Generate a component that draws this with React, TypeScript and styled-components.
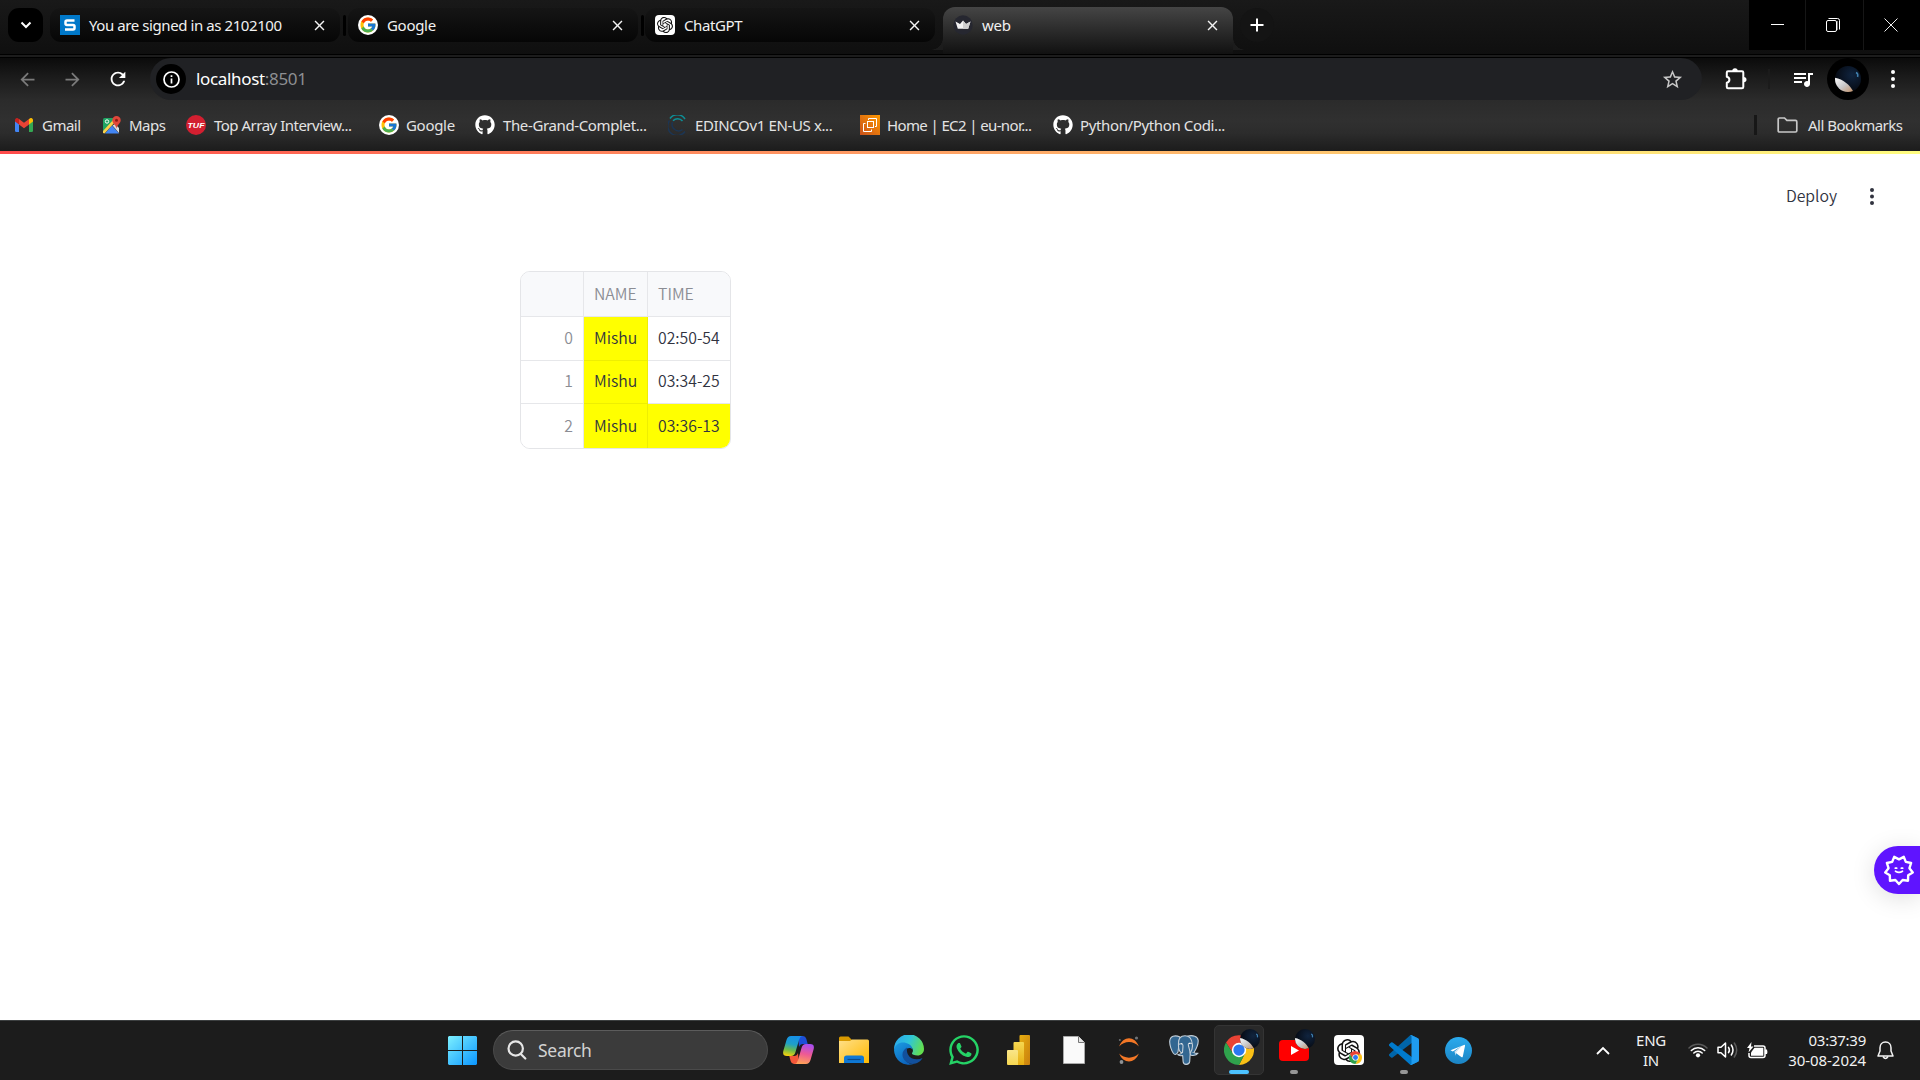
import React from 'react';
import styled, { createGlobalStyle } from 'styled-components';
import { FcGoogle } from 'react-icons/fc';
import { SiOpenai } from 'react-icons/si';
import { FaGithub, FaWhatsapp } from 'react-icons/fa';
import {
  MdArrowBack,
  MdArrowForward,
  MdRefresh,
  MdStarBorder,
  MdQueueMusic,
  MdClose,
} from 'react-icons/md';

const UI_FONT = `"Noto Sans", "Open Sans", sans-serif`;
const APP_FONT = `"Noto Sans CJK SC", "Noto Sans", sans-serif`;

const GlobalStyle = createGlobalStyle`
  * { box-sizing: border-box; }
  body { margin: 0; background: #fff; font-family: ${UI_FONT}; overflow: hidden; }
  svg { display: block; flex: none; }
`;

const Screen = styled.div`
  width: 1920px;
  height: 1080px;
  display: flex;
  flex-direction: column;
  background: #fff;
`;

const Label = styled.span<{ $size?: number; $ls?: number; $color?: string }>`
  font-size: ${(p) => p.$size ?? 15}px;
  letter-spacing: ${(p) => p.$ls ?? 0}px;
  color: ${(p) => p.$color ?? '#f1f1f1'};
  line-height: 20px;
  white-space: pre;
`;

/* ---------- tab strip ---------- */

const TabStrip = styled.header`
  height: 54px;
  display: flex;
  align-items: flex-start;
  padding-left: 8px;
  background: linear-gradient(#191919, #0f0f0f);
`;

const TabSearch = styled.button`
  width: 35px;
  height: 34px;
  margin: 8px 7px 0 0;
  padding: 0;
  border: 0;
  border-radius: 11px;
  background: #000;
  display: grid;
  place-items: center;
`;

const Tab = styled.div`
  width: 290px;
  height: 34px;
  margin-top: 8px;
  padding: 0 12px 0 10px;
  border-radius: 11px;
  background: linear-gradient(#151515, #060606);
  display: flex;
  align-items: center;
  gap: 9px;
`;

const ActiveTab = styled(Tab)`
  position: relative;
  width: 290px;
  height: 47px;
  margin: 7px 7px 0 8px;
  padding: 0 12px 11px 10px;
  border-radius: 12px 12px 0 0;
  background: linear-gradient(#454545, #111);

  &::before,
  &::after {
    content: '';
    position: absolute;
    bottom: 4px;
    width: 12px;
    height: 12px;
  }
  &::before {
    right: 100%;
    background: radial-gradient(circle at 0 0, transparent 11.5px, #1c1c1c 12px);
  }
  &::after {
    left: 100%;
    background: radial-gradient(circle at 100% 0, transparent 11.5px, #1c1c1c 12px);
  }
`;

const TabTitle = styled(Label)`
  flex: 1;
`;

const TabDivider = styled.i<{ $end?: number }>`
  width: 3px;
  height: 21px;
  margin: 15px ${(p) => p.$end ?? 2}px 0 3px;
  border-radius: 2px;
  background: #000;
`;

const NewTab = styled.button`
  width: 34px;
  height: 34px;
  margin-top: 8px;
  padding: 0;
  border: 0;
  border-radius: 17px;
  background: #141414;
  display: grid;
  place-items: center;
`;

const WindowControls = styled.div`
  margin-left: auto;
  height: 50px;
  width: 171px;
  display: grid;
  grid-template-columns: 56px 57px 56px;
  gap: 1px;
  background: #161616;
`;

const WindowButton = styled.div<{ $inset?: number }>`
  background: #000;
  padding-right: ${(p) => p.$inset ?? 0}px;
  display: grid;
  place-items: center;
`;

/* ---------- toolbar ---------- */

const Toolbar = styled.div`
  height: 97px;
  border-top: 1px solid #000;
  background: linear-gradient(#1c1c1c 0 2px, #000 2px 3px, #0b0b0b 3px, #1b1b1b 22px, #2b2b2b 45px, #303030 66px, #2c2c2c 78px, #1c1c1c 96px);
  display: flex;
  flex-direction: column;
`;

const AddressRow = styled.div`
  height: 42px;
  margin-top: 3px;
  display: flex;
  align-items: center;
`;

const NavButtons = styled.div`
  width: 150px;
  padding-left: 17px;
  display: flex;
  align-items: center;
  gap: 24px;
  color: #7b7b7b;
`;

const AddressBar = styled.div`
  width: 1552px;
  height: 42px;
  border-radius: 21px;
  background: #202124;
  display: flex;
  align-items: center;
  padding: 0 18px 0 6px;
`;

const SiteInfo = styled.span`
  width: 30px;
  height: 30px;
  margin-right: 10px;
  border-radius: 50%;
  background: #000;
  display: grid;
  place-items: center;
`;

const Url = styled(Label)`
  flex: 1;
  line-height: 24px;
`;

const Port = styled.span`
  color: #8d8f92;
`;

const ToolbarActions = styled.div`
  flex: 1;
  height: 42px;
  padding-left: 23px;
  display: flex;
  align-items: center;
`;

const ToolbarDivider = styled.i`
  width: 2px;
  height: 20px;
  margin: 0 21px 0 21px;
  background: #1b1b1b;
`;

const AvatarRing = styled.div`
  width: 42px;
  height: 42px;
  margin: 0 21px 0 12px;
  border-radius: 50%;
  background: #000;
  display: grid;
  place-items: center;
`;

const Bookmarks = styled.nav`
  height: 51px;
  padding: 0 0 2px 15px;
  display: flex;
  align-items: center;
`;

const Bookmark = styled.div<{ $width: number; $gap?: number }>`
  width: ${(p) => p.$width}px;
  height: 20px;
  display: flex;
  align-items: center;
  gap: ${(p) => p.$gap ?? 8}px;
`;

const BookmarkDivider = styled.i`
  width: 3px;
  height: 20px;
  margin: 0 20px 0 auto;
  background: #171717;
`;

const AllBookmarks = styled.div`
  width: 143px;
  display: flex;
  align-items: center;
  gap: 10px;
`;

/* ---------- page ---------- */

const Page = styled.main`
  flex: 1;
  position: relative;
  display: flex;
  flex-direction: column;
  font-family: ${APP_FONT};
  font-weight: 350;
`;

const Decoration = styled.div`
  height: 3px;
  background: linear-gradient(90deg, #ff4b4b, #fffd80);
`;

const PageHeader = styled.div`
  height: 85px;
  padding: 0 45px 1px 0;
  display: flex;
  justify-content: flex-end;
  align-items: center;
  gap: 32px;
`;

const DataGrid = styled.div`
  width: 211px;
  height: 178px;
  margin: 32px 0 0 520px;
  border: 1px solid #e4e5e8;
  border-radius: 10px;
  overflow: hidden;
  display: grid;
  grid-template-columns: 63px 64px 82px;
  grid-template-rows: 45px 43.5px 43.5px 44px;
`;

const Cell = styled.div<{ $mark?: boolean; $index?: boolean; $header?: boolean; $lastRow?: boolean; $lastCol?: boolean }>`
  display: flex;
  align-items: center;
  justify-content: ${(p) => (p.$index ? 'flex-end' : 'flex-start')};
  padding: 0 ${(p) => (p.$index ? 10 : 0)}px 2px ${(p) => (p.$index ? 0 : 10)}px;
  font-size: 15.8px;
  white-space: nowrap;
  color: ${(p) => (p.$header || p.$index ? '#8b8d94' : '#31333f')};
  background: ${(p) => (p.$mark ? '#ffff00' : p.$header ? '#f8f9fb' : '#fff')};
  border-right: ${(p) => (p.$lastCol ? 0 : 1)}px solid ${(p) => (p.$mark ? '#eeee02' : '#e6e7ea')};
  border-bottom: ${(p) => (p.$lastRow ? 0 : 1)}px solid ${(p) => (p.$mark ? '#eeee02' : '#e6e7ea')};
`;

const Assistant = styled.div`
  position: absolute;
  right: 0;
  top: 695px;
  width: 46px;
  height: 48px;
  padding-left: 9px;
  border-radius: 24px 0 0 24px;
  background: #5f14ff;
  box-shadow: 0 4px 24px rgba(0, 0, 0, 0.13);
  display: flex;
  align-items: center;
`;

/* ---------- taskbar ---------- */

const Taskbar = styled.footer`
  height: 60px;
  background: #1c1c1c;
  border-top: 1px solid #3c3f40;
  display: flex;
  align-items: center;
  padding: 0 0 1px 448px;
`;

const SearchBox = styled.div`
  width: 275px;
  height: 40px;
  margin: 0 3px 0 16px;
  padding: 0 0 1px 13px;
  border: 1px solid #4a4a4a;
  border-top-color: #5c5c5c;
  border-radius: 20px;
  background: #3b3b3b;
  display: flex;
  align-items: center;
  gap: 11px;
`;

const AppSlot = styled.div<{ $active?: boolean }>`
  position: relative;
  width: 50px;
  height: 50px;
  margin: 0 2.5px;
  border-radius: 5px;
  border: 1px solid ${(p) => (p.$active ? '#343434' : 'transparent')};
  background: ${(p) => (p.$active ? '#292929' : 'transparent')};
  display: grid;
  place-items: center;
`;

const Running = styled.i<{ $wide?: boolean }>`
  position: absolute;
  bottom: 0;
  left: 50%;
  transform: translateX(-50%);
  width: ${(p) => (p.$wide ? 20 : 8)}px;
  height: 4px;
  border-radius: 2px;
  background: ${(p) => (p.$wide ? '#4cc2ff' : '#969696')};
`;

const ProfileBadge = styled.span`
  position: absolute;
  right: 3px;
  top: 3px;
`;

const ShortcutBadge = styled.span`
  position: absolute;
  right: 11px;
  bottom: 10px;
`;

const GptTile = styled.div<{ $size: number }>`
  width: ${(p) => p.$size}px;
  height: ${(p) => p.$size}px;
  border-radius: 4px;
  background: #fff;
  color: #111;
  display: grid;
  place-items: center;
`;

const Tray = styled.div`
  margin-left: auto;
  height: 58px;
  display: flex;
  align-items: center;
  padding-right: 26px;
`;

const Stack = styled.div<{ $align: string; $width: number }>`
  width: ${(p) => p.$width}px;
  padding-bottom: 1px;
  display: flex;
  flex-direction: column;
  align-items: ${(p) => p.$align};
`;

const StatusIcons = styled.div`
  display: flex;
  align-items: center;
  gap: 9px;
  margin: 0 21px 0 -4px;
`;

const BellButton = styled.span`
  margin-left: 11px;
`;

/* ---------- drawings ---------- */

const GoogleBadge = () => (
  <svg width="20" height="20" viewBox="0 0 20 20">
    <circle cx="10" cy="10" r="10" fill="#fff" />
    <FcGoogle x={1} y={1} width={18} height={18} size={18} />
  </svg>
);

const CloseIcon = () => <MdClose size={17} color="#f4f4f4" />;

const Dots = ({ color, h = 18, r = 2 }: { color: string; h?: number; r?: number }) => (
  <svg width="6" height={h} viewBox={`0 0 6 ${h}`} fill={color}>
    <circle cx="3" cy={r} r={r} />
    <circle cx="3" cy={h / 2} r={r} />
    <circle cx="3" cy={h - r} r={r} />
  </svg>
);

const Planet = ({ size, id }: { size: number; id: string }) => (
  <svg width={size} height={size} viewBox="0 0 26 26">
    <defs>
      <clipPath id={id}><circle cx="13" cy="13" r="13" /></clipPath>
      <linearGradient id={id + 'g'} x1="0" y1="0" x2="1" y2="1">
        <stop offset="0" stopColor="#fff" /><stop offset=".5" stopColor="#c9c9cb" /><stop offset="1" stopColor="#c28a5c" />
      </linearGradient>
      <radialGradient id={id + 'n'} cx=".65" cy=".35" r=".7">
        <stop offset="0" stopColor="#10243f" /><stop offset="1" stopColor="#05080f" />
      </radialGradient>
    </defs>
    <g clipPath={`url(#${id})`}>
      <rect width="26" height="26" fill={`url(#${id}n)`} />
      <path d="M-1 11.500C8 13 15 18.500 19 27H-1Z" fill={`url(#${id}g)`} />
      <path d="M21 6.500q2.500 1 1.600 4.500" stroke="#3f7fae" strokeWidth="1.500" fill="none" />
    </g>
  </svg>
);

const Chrome = ({ size }: { size: number }) => (
  <svg width={size} height={size} viewBox="0 0 48 48">
    <path d="M24 13H44.800A24 24 0 0 0 3.200 12L14.500 29.500Z" fill="#ea4335" />
    <path d="M33.500 29.500 24 48A24 24 0 0 0 45.400 13H24Z" fill="#fbc116" />
    <path d="M14.500 29.500 3.200 12A24 24 0 0 0 24 48L33.500 29.500Z" fill="#2fa24c" />
    <circle cx="24" cy="24" r="11.500" fill="#fff" />
    <circle cx="24" cy="24" r="9" fill="#2b78f0" />
  </svg>
);

const Burst = () => {
  const pts = Array.from({ length: 18 }, (_, i) => {
    const a = Math.PI / 2 + (i * Math.PI) / 9;
    const r = i % 2 ? 10.6 : 14;
    return `${(16 + r * Math.cos(a)).toFixed(2)},${(16 + r * Math.sin(a)).toFixed(2)}`;
  }).join(' ');
  return (
    <svg width="32" height="32" viewBox="0 0 32 32" fill="none" stroke="#fff" strokeLinejoin="round" strokeLinecap="round">
      <polygon points={pts} strokeWidth="2.400" />
      <path d="M12.300 14.200h1.400M18.300 14.200h1.400" strokeWidth="1.700" />
      <path d="M12.500 17.200q3.500 2.200 7 0" strokeWidth="1.700" />
    </svg>
  );
};

const Gmail = () => (
  <svg width="18" height="14" viewBox="0 0 18 14">
    <path d="M0 2v10.700A1.300 1.300 0 0 0 1.300 14H4V6Z" fill="#4285f4" />
    <path d="M18 2v10.700a1.300 1.300 0 0 1-1.300 1.300H14V6Z" fill="#34a853" />
    <path d="M14 1v5.500l4-3V2a2 2 0 0 0-3.200-1.600Z" fill="#fbbc04" />
    <path d="M4 6.500V1l5 3.700L14 1v5.500l-5 3.700Z" fill="#ea4335" />
    <path d="M0 2v1.500l4 3V1L3.200.4A2 2 0 0 0 0 2Z" fill="#c5221f" />
  </svg>
);

const Maps = () => (
  <svg width="18" height="18" viewBox="0 0 18 18">
    <path d="M1.500 2H12L2 17H0V3.500Q0 2 1.500 2Z" fill="#1fa463" />
    <path d="M2 17.500 9 9.500l7 8Z" fill="#4285f4" />
    <path d="M0 15 11 3l2 2L1.500 17.500 0 17Z" fill="#fbd04b" />
    <path d="M9.500 9.500 12 8l4 4v5Z" fill="#dadce0" />
    <circle cx="4" cy="5.500" r="1.700" fill="none" stroke="#fff" />
    <path d="M13.500 0a4.200 4.200 0 0 1 4.200 4.200c0 3-3.200 4-4.200 8.300-1-4.300-4.200-5.300-4.200-8.300A4.200 4.200 0 0 1 13.500 0Z" fill="#e0473a" />
    <circle cx="13.500" cy="4.200" r="1.500" fill="#8c1d14" />
  </svg>
);

const Tuf = () => (
  <svg width="20" height="20" viewBox="0 0 20 20">
    <circle cx="10" cy="10" r="10" fill="#d31f30" />
    <text x="10" y="12.500" fontFamily="Liberation Sans" fontSize="7" fontWeight="bold" fontStyle="italic" fill="#fff" textAnchor="middle" textLength="17" lengthAdjust="spacingAndGlyphs">TUF</text>
  </svg>
);

const Edinco = () => (
  <svg width="18" height="20" viewBox="0 0 18 20" fill="none" strokeWidth="1.500">
    <path d="M2 3.500A9 9 0 0 1 17 4" stroke="#0d8e96" />
    <path d="M5 5.800A6.500 6.500 0 0 1 14.500 6" stroke="#0d8e96" />
    <path d="M1.500 5.500A9 9 0 0 0 17 16.500" stroke="#1c3553" />
    <path d="M4.500 7A6.500 6.500 0 0 0 14.500 14.500" stroke="#1c3553" />
  </svg>
);

const Ec2 = () => (
  <svg width="20" height="20" viewBox="0 0 20 20" fill="none" stroke="#fff" strokeWidth="1">
    <defs><linearGradient id="ec2" x1="0" y1="1" x2="1" y2="0"><stop stopColor="#c8511b" /><stop offset="1" stopColor="#ff9900" /></linearGradient></defs>
    <rect width="20" height="20" fill="url(#ec2)" stroke="none" />
    <path d="M8.500 5V3.500h8v8H15" />
    <rect x="7.500" y="6.500" width="6" height="6" />
    <path d="M5.500 8.500h-2v8h8v-2" />
  </svg>
);

const Crown = () => (
  <svg width="20" height="20" viewBox="0 0 20 20">
    <circle cx="10" cy="10" r="9.700" fill="#262730" />
    <path d="M2.500 6.500 7 9l3-3.500L13 9l4.500-2.500-2.300 7.300H4.800Z" fill="#f3f3f3" />
    <path d="M10 5.500 13 9l4.500-2.500-2.300 7.300H10Z" fill="#cfcfcf" />
  </svg>
);

const Puzzle = () => (
  <svg width="22" height="22" viewBox="0 0 22 22">
    <path d="M3 3.300H17q1.300 0 1.300 1.300v14.400q0 1.300-1.300 1.300H3q-1.200 0-1.200-1.200v-4.400q2.600-.6 2.600-3t-2.600-3V4.500Q1.800 3.300 3 3.300Z" fill="none" stroke="#fff" strokeWidth="2" strokeLinejoin="round" />
    <path d="M7.300 3a2.700 2.700 0 0 1 5.400 0ZM18.800 8.900a2.700 2.700 0 0 1 0 5.400Z" fill="#fff" />
  </svg>
);

const Folder = () => (
  <svg width="21" height="16" viewBox="0 0 21 16" fill="none" stroke="#c7c7c7" strokeWidth="1.700">
    <path d="M2.500 1h5l2.400 2.400h8.600q1.300 0 1.300 1.300v9q0 1.300-1.300 1.300h-16Q1.200 15 1.200 13.700V2.300Q1.200 1 2.500 1Z" />
  </svg>
);

const Windows = () => (
  <svg width="29" height="29" viewBox="0 0 29 29">
    <defs><linearGradient id="win" x1="0" y1="0" x2="29" y2="29" gradientUnits="userSpaceOnUse"><stop stopColor="#7df0ff" /><stop offset="1" stopColor="#0a95ff" /></linearGradient></defs>
    <path d="M1 0h13v14H0V1ZM15 0h13l1 1v13H15ZM0 15h14v14H1l-1-1ZM15 15h14v13l-1 1H15Z" fill="url(#win)" />
  </svg>
);

const Copilot = () => (
  <svg width="31" height="28" viewBox="0 0 31 28">
    <defs>
      <linearGradient id="cpA" x1=".5" y1="0" x2=".3" y2="1"><stop stopColor="#1690e8" /><stop offset=".4" stopColor="#1fa0c8" /><stop offset=".7" stopColor="#6dbb4a" /><stop offset="1" stopColor="#f5d10d" /></linearGradient>
      <linearGradient id="cpB" x1=".6" y1="0" x2=".4" y2="1"><stop stopColor="#a84df0" /><stop offset=".5" stopColor="#ee5a94" /><stop offset="1" stopColor="#ffa258" /></linearGradient>
    </defs>
    <path d="M15 0h5q2.500 0 3.300 2.800L24.700 8H20q-3 0-4 3Z" fill="#1d4fd7" />
    <path d="M16 28h-5q-2.500 0-3.300-2.800L6.300 20H11q3 0 4-3Z" fill="#f4583a" />
    <path d="M8 0h11q-2 .5-3 4l-3.500 12q-1 4-4.500 4H4Q-.8 20 .3 15L3.500 4Q4.700 0 8 0Z" fill="url(#cpA)" />
    <path d="M23 28H12q2-.5 3-4l3.500-12q1-4 4.500-4h4q4.800 0 3.700 5L27.500 24Q26.300 28 23 28Z" fill="url(#cpB)" />
  </svg>
);

const Explorer = () => (
  <svg width="30" height="28" viewBox="0 0 30 28">
    <defs><linearGradient id="fold" x1="0" y1="0" x2="1" y2="1"><stop stopColor="#ffe08a" /><stop offset="1" stopColor="#ffb900" /></linearGradient></defs>
    <path d="M0 2q0-1.500 1.500-1.500h8L13 4v4H0Z" fill="#d99a00" />
    <path d="M0 5h11l2-1.500h15.500Q30 3.500 30 5v22H0Z" fill="url(#fold)" />
    <path d="M5 27v-5q0-2.500 2.500-2.500h15Q25 19.500 25 22v5Z" fill="#0f78d4" />
    <path d="M8.500 23.500h13" stroke="#0a4a8a" strokeWidth="1.200" />
  </svg>
);

const Edge = () => (
  <svg width="30" height="30" viewBox="0 0 30 30">
    <defs>
      <linearGradient id="edA" x1="0" y1=".2" x2="1" y2=".5"><stop stopColor="#2aa6ee" /><stop offset=".5" stopColor="#2fc5d9" /><stop offset="1" stopColor="#63df4f" /></linearGradient>
      <linearGradient id="edB" x1="0" y1="0" x2=".6" y2="1"><stop stopColor="#1b9de2" /><stop offset="1" stopColor="#0c63bd" /></linearGradient>
    </defs>
    <path d="M0 14.500A15 15 0 0 1 30 14c0 4-3 6.500-6.500 6.500-3.500 0-6-1-5.500-2.500 1.500-1.500 1.500-5-2-6.500C11 8.500 3 9 0 14.500Z" fill="url(#edA)" />
    <path d="M0 15C1 9 7 6.500 12 8c4 1.200 6.500 3.500 6.500 6.500-4-4-9 .5-8.500 5.500.5 6 5 9.500 9.500 9A15 15 0 0 1 0 15Z" fill="url(#edB)" />
    <path d="M13 12.500c-5.500 3-6 9.500-1.500 13.500 6 5.500 14 2.500 17-3-5 2.500-12 1.500-14.500-3.500-1.500-3-1-5-1-7Z" fill="#12509c" />
  </svg>
);

const PowerBi = () => (
  <svg width="23" height="30" viewBox="0 0 23 30">
    <defs>
      <linearGradient id="pb1" x1="0" y1="0" x2="1" y2="1"><stop stopColor="#e6ad10" /><stop offset="1" stopColor="#c87e0e" /></linearGradient>
      <linearGradient id="pb2" x1="0" y1="0" x2="0" y2="1"><stop stopColor="#f6d751" /><stop offset="1" stopColor="#e6ad10" /></linearGradient>
      <linearGradient id="pb3" x1="0" y1="0" x2="0" y2="1"><stop stopColor="#f9e589" /><stop offset="1" stopColor="#f6d751" /></linearGradient>
    </defs>
    <rect x="12.500" width="10.500" height="30" rx="1" fill="url(#pb1)" />
    <path d="M6.500 8q0-1 1-1H16q1 0 1 1v22H6.500Z" fill="url(#pb2)" />
    <path d="M0 16q0-1 1-1h9q1 0 1 1v14H1q-1 0-1-1Z" fill="url(#pb3)" />
  </svg>
);

const FileIcon = () => (
  <svg width="22" height="28" viewBox="0 0 22 28">
    <path d="M.5.500h15l6 6v21H.5Z" fill="#fafafa" stroke="#aaa" />
    <path d="M15.500.500v6h6" fill="#e6e6e6" stroke="#777" />
  </svg>
);

const Jupyter = () => (
  <svg width="22" height="28" viewBox="0 0 22 28">
    <path d="M1.200 10.500C5-.5 17-.5 20.800 10.500 16 4.500 6 4.500 1.200 10.500ZM1.200 17.500C5 28 17 28 20.800 17.500 16 23 6 23 1.200 17.500Z" fill="#f37726" />
    <circle cx="18.500" cy="2" r="1.600" fill="#6e7175" /><circle cx="1.800" cy="4" r="1" fill="#6e7175" /><circle cx="3.500" cy="26" r="1.900" fill="#8e9194" />
  </svg>
);

const Postgres = () => (
  <svg width="30" height="30" viewBox="0 0 30 30" fill="#336791" stroke="#c3cfd9" strokeWidth="1.100" strokeLinejoin="round" strokeLinecap="round">
    <path d="M11 2C6-.2 1 .8.700 6.500.600 10 2.500 16 4.500 18.500c1.500 1.700 3 1 4.500-1.500Z" />
    <path d="M18 1.500C24-.8 29 2 29.200 5.500c.2 4-2 8.500-4.200 12l-4 1.500Z" />
    <path d="M20.500 18.500c.5 2 1.500 2.300 3.500 2 2-.2 4-.8 5-2.300-1.500.3-3.200.4-4-.7" />
    <path d="M13.500 17.500c-1.800 2-3.200 1.500-4.800 2.200 1.500 1.500 3.500 1 5 .8l.4 6c.2 2 1.400 3 3.200 2.900 2-.1 3.200-1 3.400-3l.5-8.400c1.500-2 2.600-5 2.200-8.500C22.800 3.500 20 .800 16 .800c-4.500 0-6.800 3-6.500 8-.2 4 .5 7.500 2.500 8.700Z" />
    <path d="M9.600 9.500c1.500-1.200 4-1 4.300.5.300 2.500-.3 4.500-.4 7.500M22.500 8.500c-2-.8-3.200 0-3.200 1 .2 3 1.700 5 1.700 8.500" fill="none" />
    <path d="M12.300 8.800h.6M20.300 8.500h.5" stroke="#fff" />
  </svg>
);

const YouTube = () => (
  <svg width="30" height="21" viewBox="0 0 30 21">
    <rect width="30" height="21" rx="4" fill="#f00" /><path d="M12 6v9l8-4.500Z" fill="#fff" />
  </svg>
);

const VsCode = () => (
  <svg width="30" height="30" viewBox="0 0 100 100">
    <path d="M96.500 10.800 75.900.9a6.200 6.200 0 0 0-7.100 1.200L1.300 63.600a4.200 4.200 0 0 0 0 6.200l5.500 5a4.200 4.200 0 0 0 5.300.2L93.400 13.400A4.100 4.100 0 0 1 100 16.700v-.2a6.300 6.300 0 0 0-3.500-5.700Z" fill="#0065a9" />
    <path d="m96.500 89.200-20.600 9.900a6.200 6.200 0 0 1-7.100-1.200L1.300 36.400a4.200 4.200 0 0 1 0-6.200l5.500-5a4.200 4.200 0 0 1 5.300-.2l81.300 61.600a4.100 4.100 0 0 0 6.600-3.300v.2a6.300 6.300 0 0 1-3.500 5.700Z" fill="#007acc" />
    <path d="M75.900 99.100a6.200 6.200 0 0 1-7.100-1.200 3.700 3.700 0 0 0 6.200-2.600V4.700a3.700 3.700 0 0 0-6.200-2.600A6.200 6.200 0 0 1 75.900.9l20.600 9.900a6.200 6.200 0 0 1 3.500 5.700v67a6.200 6.200 0 0 1-3.500 5.700Z" fill="#1f9cf0" />
  </svg>
);

const Telegram = () => (
  <svg width="27" height="27" viewBox="0 0 27 27">
    <defs><linearGradient id="tg" x1="0" y1="0" x2="0" y2="1"><stop stopColor="#2aabee" /><stop offset="1" stopColor="#1c84c4" /></linearGradient></defs>
    <circle cx="13.500" cy="13.500" r="13.500" fill="url(#tg)" />
    <path d="M5.500 13.200 19 7.900q1.200-.4 1 1l-2.200 10.500q-.3 1.300-1.500.6L9.500 15l7-6-8.700 5.500Z" fill="#fff" />
    <path d="m9.500 14.500 7.300-5.700-5.500 6.500-.5 3.500Z" fill="#cfe3f2" />
  </svg>
);

const Magnifier = () => (
  <svg width="20" height="20" viewBox="0 0 20 20" fill="none" stroke="#e6e6e6" strokeWidth="2.200" strokeLinecap="round">
    <circle cx="8.700" cy="8.500" r="7.200" /><path d="m13.800 14 4.500 4.500" />
  </svg>
);

const Wifi = () => (
  <svg width="20" height="16" viewBox="0 0 20 16" fill="none" strokeWidth="1.500" strokeLinecap="round">
    <path d="M1 6a12.500 12.500 0 0 1 18 0" stroke="#5a5a5a" />
    <path d="M3.300 8.500a9.300 9.300 0 0 1 13.400 0M5.800 11a6 6 0 0 1 8.400 0" stroke="#fff" />
    <circle cx="10" cy="13.300" r="2.100" fill="#fff" />
  </svg>
);

const Volume = () => (
  <svg width="21" height="18" viewBox="0 0 21 18" fill="none" stroke="#fff" strokeWidth="1.500" strokeLinecap="round" strokeLinejoin="round">
    <path d="M1 6.200h3L8.500 2v14L4 11.800H1Z" />
    <path d="M11.500 6.300q1.800 2.700 0 5.400M14.300 4q3.400 5 0 10" />
    <path d="M17.300 2q4.800 7 0 14" stroke="#5a5a5a" />
  </svg>
);

const Battery = () => (
  <svg width="21" height="17" viewBox="0 0 21 17">
    <path d="M7 4h9q2 0 2 2v7.500q0 2-2 2H4q-2 0-2-2V11" fill="none" stroke="#fff" strokeWidth="1.500" />
    <path d="M7.500 5.800h8.800v8H4v-3.300Z" fill="#fff" /><path d="M18 7.500h2q.8 2.200 0 4.500h-2Z" fill="#fff" />
    <path d="M4.500 0 0 6h2.500L1.500 10.500 6.500 4.500H4Z" fill="#fff" />
  </svg>
);

const Bell = () => (
  <svg width="17" height="19" viewBox="0 0 17 19" fill="none" stroke="#f4f4f4" strokeWidth="1.500" strokeLinejoin="round">
    <path d="M8.500 1C5 1 3 3.600 3 6.800V10L1 15h15l-2-5V6.800C14 3.600 12 1 8.500 1Z" /><path d="M6 15.500q2.500 4 5 0" />
  </svg>
);

/* ---------- data ---------- */

const rows = [
  { name: 'Mishu', time: '02:50-54', late: false },
  { name: 'Mishu', time: '03:34-25', late: false },
  { name: 'Mishu', time: '03:36-13', late: true },
];

const bookmarks = [
  { icon: <Gmail />, text: 'Gmail', width: 88, gap: 9, ls: -0.5 },
  { icon: <Maps />, text: 'Maps', width: 83, gap: 8, ls: -0.5 },
  { icon: <Tuf />, text: 'Top Array Interview...', width: 193, gap: 8, ls: -0.5 },
  { icon: <GoogleBadge />, text: 'Google', width: 96, gap: 7, ls: -0.3 },
  { icon: <FaGithub size={20} color="#fff" />, text: 'The-Grand-Complet...', width: 193, gap: 8, ls: -0.37 },
  { icon: <Edinco />, text: 'EDINCOv1 EN-US x...', width: 192, gap: 9, ls: -0.37 },
  { icon: <Ec2 />, text: 'Home | EC2 | eu-nor...', width: 193, gap: 7, ls: -0.62 },
  { icon: <FaGithub size={20} color="#fff" />, text: 'Python/Python Codi...', width: 190, gap: 7, ls: -0.37 },
];

const apps: { icon: React.ReactNode; badge?: string; running?: boolean; active?: boolean; shortcut?: boolean }[] = [
  { icon: <Copilot /> },
  { icon: <Explorer /> },
  { icon: <Edge /> },
  { icon: <FaWhatsapp size={34} color="#25d366" /> },
  { icon: <PowerBi /> },
  { icon: <FileIcon /> },
  { icon: <Jupyter /> },
  { icon: <Postgres /> },
  { icon: <Chrome size={30} />, badge: 'p1', running: true, active: true },
  { icon: <YouTube />, badge: 'p2', running: true },
  { icon: <GptTile $size={30}><SiOpenai size={23} /></GptTile>, shortcut: true },
  { icon: <VsCode />, running: true },
  { icon: <Telegram /> },
];

export default function App() {
  return (
    <>
      <GlobalStyle />
      <Screen>
        <TabStrip>
          <TabSearch>
            <svg width="12" height="8" viewBox="0 0 12 8" fill="none" stroke="#fff" strokeWidth="2"><path d="m1.500 1.500 4.500 4.500 4.500-4.500" /></svg>
          </TabSearch>
          <Tab>
            <svg width="20" height="20" viewBox="0 0 20 20"><rect width="20" height="20" fill="#0078c9" /><path d="M14.500 5.500H7q-1.500 0-1.500 1.500v1.500Q5.500 10 7 10h6q1.500 0 1.500 1.500V13q0 1.500-1.500 1.500H5" fill="none" stroke="#fff" strokeWidth="2.500" /></svg>
            <TabTitle $ls={-0.42}>You are signed in as 2102100</TabTitle>
            <CloseIcon />
          </Tab>
          <TabDivider />
          <Tab>
            <GoogleBadge />
            <TabTitle $ls={-0.3}>Google</TabTitle>
            <CloseIcon />
          </Tab>
          <TabDivider $end={1} />
          <Tab>
            <GptTile $size={20}><SiOpenai size={16} /></GptTile>
            <TabTitle $ls={-0.4}>ChatGPT</TabTitle>
            <CloseIcon />
          </Tab>
          <ActiveTab>
            <Crown />
            <TabTitle $ls={-0.3}>web</TabTitle>
            <CloseIcon />
          </ActiveTab>
          <NewTab>
            <svg width="14" height="14" viewBox="0 0 14 14" stroke="#fff" strokeWidth="2"><path d="M7 .5v13M.5 7h13" /></svg>
          </NewTab>
          <WindowControls>
            <WindowButton><svg width="13" height="2" viewBox="0 0 13 2"><path d="M0 .5h13" stroke="#fff" /></svg></WindowButton>
            <WindowButton $inset={3}>
              <svg width="14" height="14" viewBox="0 0 14 14" fill="none" stroke="#fff"><rect x=".5" y="2.500" width="10" height="11" rx="1.500" /><path d="M2.500.500h9q2 0 2 2v9" /><path d="M11.500 3v9" stroke="#777" /></svg>
            </WindowButton>
            <WindowButton $inset={2}><svg width="14" height="14" viewBox="0 0 14 14" stroke="#eee"><path d="m.5.500 13 13M13.500.500l-13 13" /></svg></WindowButton>
          </WindowControls>
        </TabStrip>

        <Toolbar>
          <AddressRow>
            <NavButtons>
              <MdArrowBack size={21} />
              <MdArrowForward size={21} />
              <MdRefresh size={22} color="#fff" />
            </NavButtons>
            <AddressBar>
              <SiteInfo>
                <svg width="17" height="17" viewBox="0 0 17 17"><circle cx="8.500" cy="8.500" r="7.500" fill="none" stroke="#fff" strokeWidth="1.700" /><path d="M8.500 7.500v5M8.500 4.200v1.800" stroke="#fff" strokeWidth="1.700" /></svg>
              </SiteInfo>
              <Url $size={17} $ls={-0.33} $color="#fff">localhost<Port>:8501</Port></Url>
              <MdStarBorder size={23} color="#c7c7c7" />
            </AddressBar>
            <ToolbarActions>
              <Puzzle />
              <ToolbarDivider />
              <MdQueueMusic size={24} color="#fff" />
              <AvatarRing><Planet size={26} id="p0" /></AvatarRing>
              <Dots color="#fff" />
            </ToolbarActions>
          </AddressRow>
          <Bookmarks>
            {bookmarks.map((b, i) => (
              <Bookmark key={i} $width={b.width} $gap={b.gap}>
                {b.icon}
                <Label $ls={b.ls} $color="#e3e3e3">{b.text}</Label>
              </Bookmark>
            ))}
            <BookmarkDivider />
            <AllBookmarks><Folder /><Label $ls={-0.5} $color="#e3e3e3">All Bookmarks</Label></AllBookmarks>
          </Bookmarks>
        </Toolbar>

        <Page>
          <Decoration />
          <PageHeader>
            <Label $size={15.8} $color="#31333f">Deploy</Label>
            <Dots color="#31333f" h={17} />
          </PageHeader>
          <DataGrid>
            <Cell $header />
            <Cell $header>NAME</Cell>
            <Cell $header $lastCol>TIME</Cell>
            {rows.map((r, i) => (
              <React.Fragment key={i}>
                <Cell $index $lastRow={i === 2}>{i}</Cell>
                <Cell $mark $lastRow={i === 2}>{r.name}</Cell>
                <Cell $mark={r.late} $lastCol $lastRow={i === 2}>{r.time}</Cell>
              </React.Fragment>
            ))}
          </DataGrid>
          <Assistant><Burst /></Assistant>
        </Page>

        <Taskbar>
          <Windows />
          <SearchBox><Magnifier /><Label $size={17.5} $ls={-0.3} $color="#d2d2d2">Search</Label></SearchBox>
          {apps.map((a, i) => (
            <AppSlot key={i} $active={a.active}>
              {a.icon}
              {a.badge && <ProfileBadge><Planet size={20} id={a.badge} /></ProfileBadge>}
              {a.shortcut && <ShortcutBadge><Chrome size={13} /></ShortcutBadge>}
              {a.running && <Running $wide={a.active} />}
            </AppSlot>
          ))}
          <Tray>
            <svg width="14" height="9" viewBox="0 0 14 9" fill="none" stroke="#fff" strokeWidth="1.800"><path d="m1 8 6-6 6 6" /></svg>
            <Stack $align="center" $width={82}>
              <Label $ls={-0.3}>ENG</Label>
              <Label $ls={-0.3}>IN</Label>
            </Stack>
            <StatusIcons><Wifi /><Volume /><Battery /></StatusIcons>
            <Stack $align="flex-end" $width={77}>
              <Label $ls={-0.25}>03:37:39</Label>
              <Label $ls={-0.05}>30-08-2024</Label>
            </Stack>
            <BellButton><Bell /></BellButton>
          </Tray>
        </Taskbar>
      </Screen>
    </>
  );
}
